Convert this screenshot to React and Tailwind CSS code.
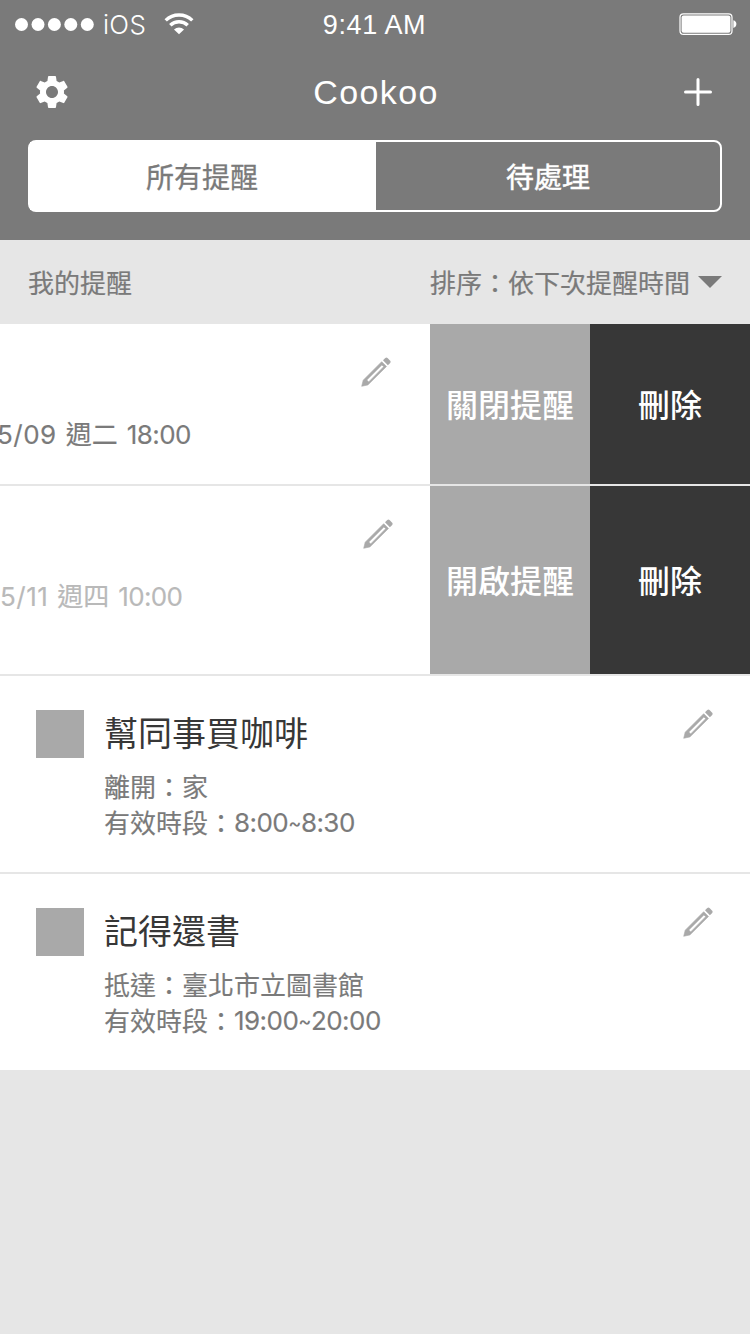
import React from "react";

function Gear() {
  return (
    <svg className="h-10 w-10" viewBox="0 0 24 24" fill="#fff">
      <path d="M19.14 12.94c.04-.3.06-.61.06-.94 0-.32-.02-.64-.07-.94l2.03-1.58c.18-.14.23-.41.12-.61l-1.92-3.32c-.12-.22-.37-.29-.59-.22l-2.39.96c-.5-.38-1.03-.7-1.62-.94l-.36-2.54c-.04-.24-.24-.41-.48-.41h-3.84c-.24 0-.43.17-.47.41l-.36 2.54c-.59.24-1.13.57-1.62.94l-2.39-.96c-.22-.08-.47 0-.59.22L2.74 8.87c-.12.21-.08.47.12.61l2.03 1.58c-.05.3-.09.63-.09.94s.02.64.07.94l-2.03 1.58c-.18.14-.23.41-.12.61l1.92 3.32c.12.22.37.29.59.22l2.39-.96c.5.38 1.03.7 1.62.94l.36 2.54c.05.24.24.41.48.41h3.84c.24 0 .44-.17.47-.41l.36-2.54c.59-.24 1.13-.56 1.62-.94l2.39.96c.22.08.47 0 .59-.22l1.92-3.32c.12-.22.07-.47-.12-.61l-2.01-1.58zM12 15.6c-1.98 0-3.6-1.62-3.6-3.6s1.62-3.6 3.6-3.6 3.6 1.62 3.6 3.6-1.62 3.6-3.6 3.6z" />
    </svg>
  );
}

function Wifi() {
  return (
    <svg className="ml-[18px] h-[22px] w-[30px]" viewBox="0 0 30 22" fill="none" stroke="#fff" strokeWidth="3.4">
      <path d="M1.7 7.4a19 19 0 0 1 26.6 0" />
      <path d="M6.3 12.3a12.4 12.4 0 0 1 17.4 0" />
      <path d="M15 21.3 10 16.6a7.2 7.2 0 0 1 10 0Z" fill="#fff" stroke="none" />
    </svg>
  );
}

function Battery() {
  return (
    <svg className="h-6 w-[58px] justify-self-end" viewBox="0 0 58 24">
      <rect x="1" y="1.8" width="52" height="20.6" rx="3.5" fill="none" stroke="#fff" strokeWidth="1.2" />
      <rect x="2.6" y="3.4" width="48.8" height="17.4" rx="2" fill="#fff" />
      <path d="M54.4 8.2C58.4 9 58.4 15.200 54.4 16Z" fill="#fff" />
    </svg>
  );
}

function Pencil() {
  return (
    <svg className="h-8 w-8 shrink-0" viewBox="0 0 32 32" fill="#a9a9a9">
      <path
        fillRule="evenodd"
        stroke="#a9a9a9"
        strokeWidth="0.6"
        strokeLinejoin="round"
        d="M1.700 30.300 3.200 24.200 21.700 5.700 26.500 10.500 7.900 28.900ZM6.800 24 8.700 25.900 23.700 10.700 21.900 8.900Z"
      />
      <path d="M23 4.300 25.300 2Q26.400 1 27.500 2L30.200 4.800Q31.200 5.900 30.200 7L27.900 9.300Z" />
    </svg>
  );
}

function Swiped({ date, day, time, action, className, textClass, timeClass, pencilClass }) {
  return (
    <div className={`flex border-b-2 border-[#e6e6e6] bg-white ${className}`}>
      <div className="flex w-[430px] justify-between">
        <div className={`mt-[93px] flex gap-[9px] whitespace-nowrap text-[26px] leading-[36px] [-webkit-text-stroke:0.15px] ${textClass}`}>
          <span className="tracking-[0.5px]">{date}</span>
          <span>{day}</span>
          <span className={timeClass}>{time}</span>
        </div>
        <div className={`mt-8 ${pencilClass}`}><Pencil /></div>
      </div>
      <div className="flex w-40 items-center justify-center bg-[#a9a9a9] pt-1 text-[32px] font-medium text-white">{action}</div>
      <div className="flex w-40 items-center justify-center bg-[#373737] pt-1 text-[32px] font-medium text-white">刪除</div>
    </div>
  );
}

function Item({ title, place, from, to, className }) {
  return (
    <div className={`flex bg-white pl-9 pr-9 ${className}`}>
      <div className="mt-[34px] h-12 w-12 bg-[#a9a9a9]" />
      <div className="ml-5 mt-[34px] flex-1">
        <div className="text-[34px] leading-[48px] text-[#373737]">{title}</div>
        <div className="mt-3 text-[26px] leading-[36px] text-[#7a7a7a] [-webkit-text-stroke:0.15px]">
          <div>{place}</div>
          <div className="flex">
            <span>有效時段：</span>
            <span className="-mt-px flex tracking-[-0.55px]">
              <span>{from}</span>
              <span className="text-[20px]">~</span>
              <span>{to}</span>
            </span>
          </div>
        </div>
      </div>
      <div className="mt-8"><Pencil /></div>
    </div>
  );
}

export default function App() {
  return (
    <div className="h-[1334px] w-[750px] overflow-hidden bg-[#e6e6e6] font-['Inter','Noto_Sans_CJK_TC',sans-serif]">
      <header className="h-60 bg-[#7a7a7a] text-white">
        <div className="grid h-12 grid-cols-3 items-center pl-[14px] pr-[13px] text-[27px]">
          <div className="flex items-center">
            <svg className="h-4 w-20" viewBox="0 0 80 16" fill="#fff">
              <circle cx="7.5" cy="8.5" r="6.5" />
              <circle cx="24" cy="8.5" r="6.5" />
              <circle cx="40.400" cy="8.5" r="6.5" />
              <circle cx="56.800" cy="8.5" r="6.5" />
              <circle cx="73.300" cy="8.5" r="6.5" />
            </svg>
            <span className="ml-[9px] text-[26px] font-light tracking-[0.3px]">iOS</span>
            <Wifi />
          </div>
          <div className="pr-0.5 pt-0.5 text-center font-['Liberation_Sans'] tracking-[0.6px]">9:41 AM</div>
          <Battery />
        </div>
        <div className="grid h-[88px] grid-cols-3 items-center pl-8 pr-[38px]">
          <Gear />
          <span className="pl-[8px] text-center font-['Liberation_Sans'] text-[34px] tracking-[1.4px]">Cookoo</span>
          <svg className="h-7 w-7 justify-self-end" viewBox="0 0 28 28" stroke="#fff" strokeWidth="3" strokeLinecap="round">
            <path d="M14 1.500V26.500M1.500 14H26.500" />
          </svg>
        </div>
        <div className="mx-7 mt-1 flex h-[72px] rounded-lg border-2 border-white text-[28px]">
          <div className="flex w-[346px] items-center justify-center bg-white pr-0.5 pt-[3px] text-[#7a7a7a] [-webkit-text-stroke:0.3px]">所有提醒</div>
          <div className="flex flex-1 items-center justify-center pt-[3px] [-webkit-text-stroke:0.5px]">待處理</div>
        </div>
      </header>
      <div className="flex h-[84px] items-center justify-between px-7 pt-[3px] text-[26px] text-[#7a7a7a] [-webkit-text-stroke:0.2px]">
        <span>我的提醒</span>
        <div className="flex items-center gap-2">
          <span>排序：依下次提醒時間</span>
          <svg className="-mt-[3px] h-3 w-6" viewBox="0 0 24 12" fill="#7a7a7a"><path d="M0 0H24L12 12Z" /></svg>
        </div>
      </div>
      <Swiped date="5/09" day="週二" time="18:00" action="關閉提醒" className="h-[162px]" textClass="-ml-[3px] text-[#7a7a7a]" timeClass="tracking-[-0.55px]" pencilClass="mr-[38px]" />
      <Swiped date="5/11" day="週四" time="10:00" action="開啟提醒" className="h-[190px]" textClass="text-[#b9b9b9]" timeClass="tracking-[-0.7px]" pencilClass="mr-9" />
      <Item title="幫同事買咖啡" place="離開：家" from="8:00" to="8:30" className="h-[198px] border-b-2 border-[#e6e6e6]" />
      <Item title="記得還書" place="抵達：臺北市立圖書館" from="19:00" to="20:00" className="h-[196px]" />
    </div>
  );
}
